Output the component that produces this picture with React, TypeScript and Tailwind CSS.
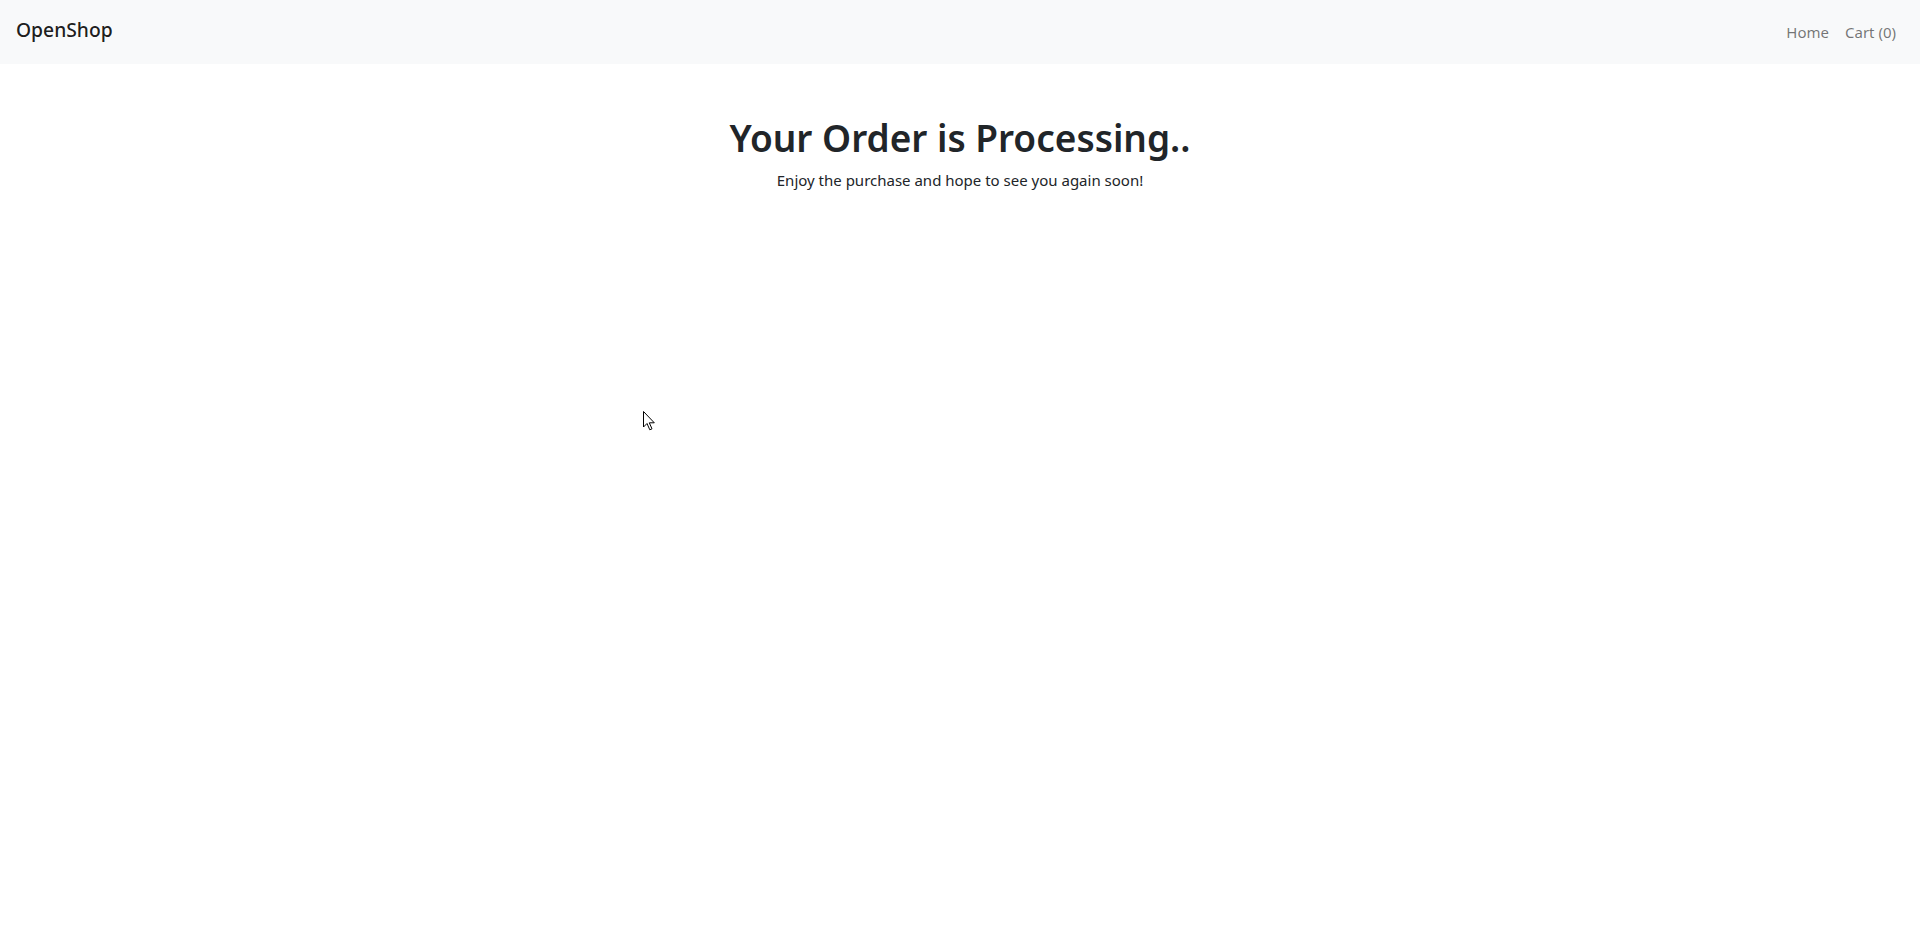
export default function App() {
  return (
    <div
      className="relative min-h-[937px] bg-white text-[#212529]"
      style={{ fontFamily: '"Noto Sans", "Open Sans", sans-serif' }}
    >
      <nav className="flex h-16 items-center justify-between bg-[#f8f9fa] px-4">
        <a className="mb-1 py-[5px] text-[19.3px] font-medium leading-[30px] text-black/90">OpenShop</a>
        <div className="flex items-center">
          <a className="px-2 py-2 text-[15px] leading-6 text-black/55">Home</a>
          <a className="px-2 py-2 text-[15px] leading-6 text-black/55">Cart (0)</a>
        </div>
      </nav>

      <main className="mt-[50px] text-center">
        <h1 className="mb-[6px] text-[37px] font-semibold leading-[48px]">Your Order is Processing..</h1>
        <p className="text-[15px] leading-6">Enjoy the purchase and hope to see you again soon!</p>
      </main>

      {/* mouse pointer visible in the capture */}
      <svg
        className="absolute left-[643px] top-[411px]"
        width="13"
        height="20"
        viewBox="0 0 13 20"
      >
        <path
          d="M0.5 0.5 L0.5 16 L4 12.5 L6.8 18.8 L9 17.8 L6.3 11.8 L11.3 11.8 Z"
          fill="white"
          stroke="black"
          strokeWidth="1"
          strokeLinejoin="round"
        />
      </svg>
    </div>
  );
}
